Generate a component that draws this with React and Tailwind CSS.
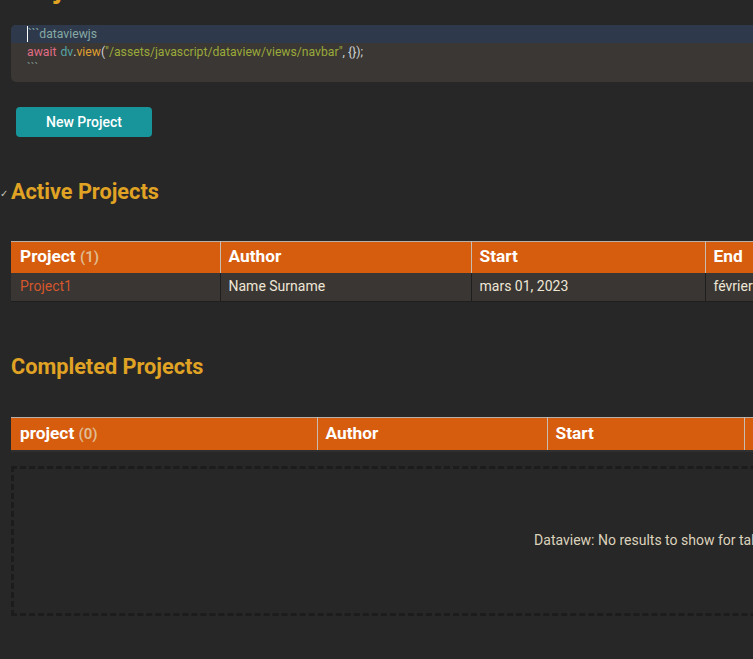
export default function App() {
  const font = "font-['Roboto','Liberation_Sans',sans-serif]";
  const th = "text-left pl-[8px] font-bold text-white text-[17.3px]";
  return (
    <div className={`w-[753px] h-[659px] overflow-hidden bg-[#272727] ${font}`}>
      <div className="w-[1345px] pl-[11px] pr-[11px]">
        <h1 className="-mt-[28px] text-[28px] leading-[34px] font-bold text-[#e0a324]">Projects</h1>

        <div className="mt-[19px] rounded-[5px] bg-[#3a3734] pb-[7px] text-[12.2px] leading-[18px] overflow-hidden">
          <div className="bg-[#2e3a4c] pl-[16px] h-[18px] flex items-center">
            <span className="w-px h-[16px] bg-white"></span>
            <span className="text-[#86a8a4]">```dataviewjs</span>
          </div>
          <div className="pl-[16px] h-[18px] flex items-center">
            <span className="text-[#e06c86]">await</span>
            <span className="text-[#56a4a8] ml-[4px]">dv</span>
            <span className="text-[#cfd3d6]">.</span>
            <span className="text-[#e0a030]">view</span>
            <span className="text-[#cfd3d6]">(</span>
            <span className="text-[#9aaa3a]">"/assets/javascript/dataview/views/navbar"</span>
            <span className="text-[#cfd3d6]">, {"{}"});</span>
          </div>
          <div className="pl-[16px] h-[14px] flex items-center text-[#7e8f8a]">```</div>
        </div>

        <button className="mt-[25px] ml-[5px] w-[136px] h-[30px] rounded-[4px] bg-[#17959b] text-white text-[14px] font-medium">
          New Project
        </button>

        <div className="relative mt-[40px] h-[30px] flex items-center">
          <span className="absolute -left-[11px] top-[9px] text-[#c8c4bc] text-[10px]">✓</span>
          <h2 className="text-[21.7px] font-bold text-[#e0a324] leading-[30px]">Active Projects</h2>
        </div>

        <table className="mt-[34px] w-full border-collapse text-[14px]">
          <thead>
            <tr className="bg-[#d65c0e] border-t border-[#b8b0a8] h-[31px]">
              <th className={`w-[209px] pl-[9px] border-r border-[#c8bcb0] ${th}`}>
                Project <span className="text-[#e0bc92] font-semibold text-[15px]">(1)</span>
              </th>
              <th className={`w-[251px] border-r border-[#c8bcb0] ${th}`}>Author</th>
              <th className={`w-[234px] border-r border-[#c8bcb0] ${th}`}>Start</th>
              <th className={th}>End</th>
            </tr>
          </thead>
          <tbody>
            <tr className="bg-[#393634] h-[29px] border-b border-[#1e1e1e]">
              <td className="pl-[9px] text-[#d5562b] border-r border-[#1e1e1e]">Project1</td>
              <td className="pl-[8px] text-[#efe6d6] border-r border-[#1e1e1e]">Name Surname</td>
              <td className="pl-[8px] text-[#efe6d6] border-r border-[#1e1e1e]">mars 01, 2023</td>
              <td className="pl-[8px] text-[#efe6d6]">février 01, 2024</td>
            </tr>
          </tbody>
        </table>

        <h2 className="mt-[50px] text-[21.7px] font-bold text-[#e0a324] leading-[30px]">Completed Projects</h2>

        <table className="mt-[35px] w-full border-collapse text-[14px]">
          <thead>
            <tr className="bg-[#d65c0e] border-t border-[#b8b0a8] border-b-[2px] border-b-[#2f2f2f] h-[33px]">
              <th className={`w-[306px] pl-[9px] border-r border-[#c8bcb0] ${th}`}>
                project <span className="text-[#e0bc92] font-semibold text-[15px]">(0)</span>
              </th>
              <th className={`w-[230px] border-r border-[#c8bcb0] ${th}`}>Author</th>
              <th className={`w-[197px] border-r border-[#c8bcb0] ${th}`}>Start</th>
              <th className={th}>End</th>
            </tr>
          </thead>
        </table>

        <div className="mt-[14px] h-[150px] border-[3px] border-dashed border-[#1c1c1c] flex items-center justify-center">
          <span className="text-[14px] text-[#dcd2bc]">Dataview: No results to show for table query.</span>
        </div>
      </div>
    </div>
  );
}
